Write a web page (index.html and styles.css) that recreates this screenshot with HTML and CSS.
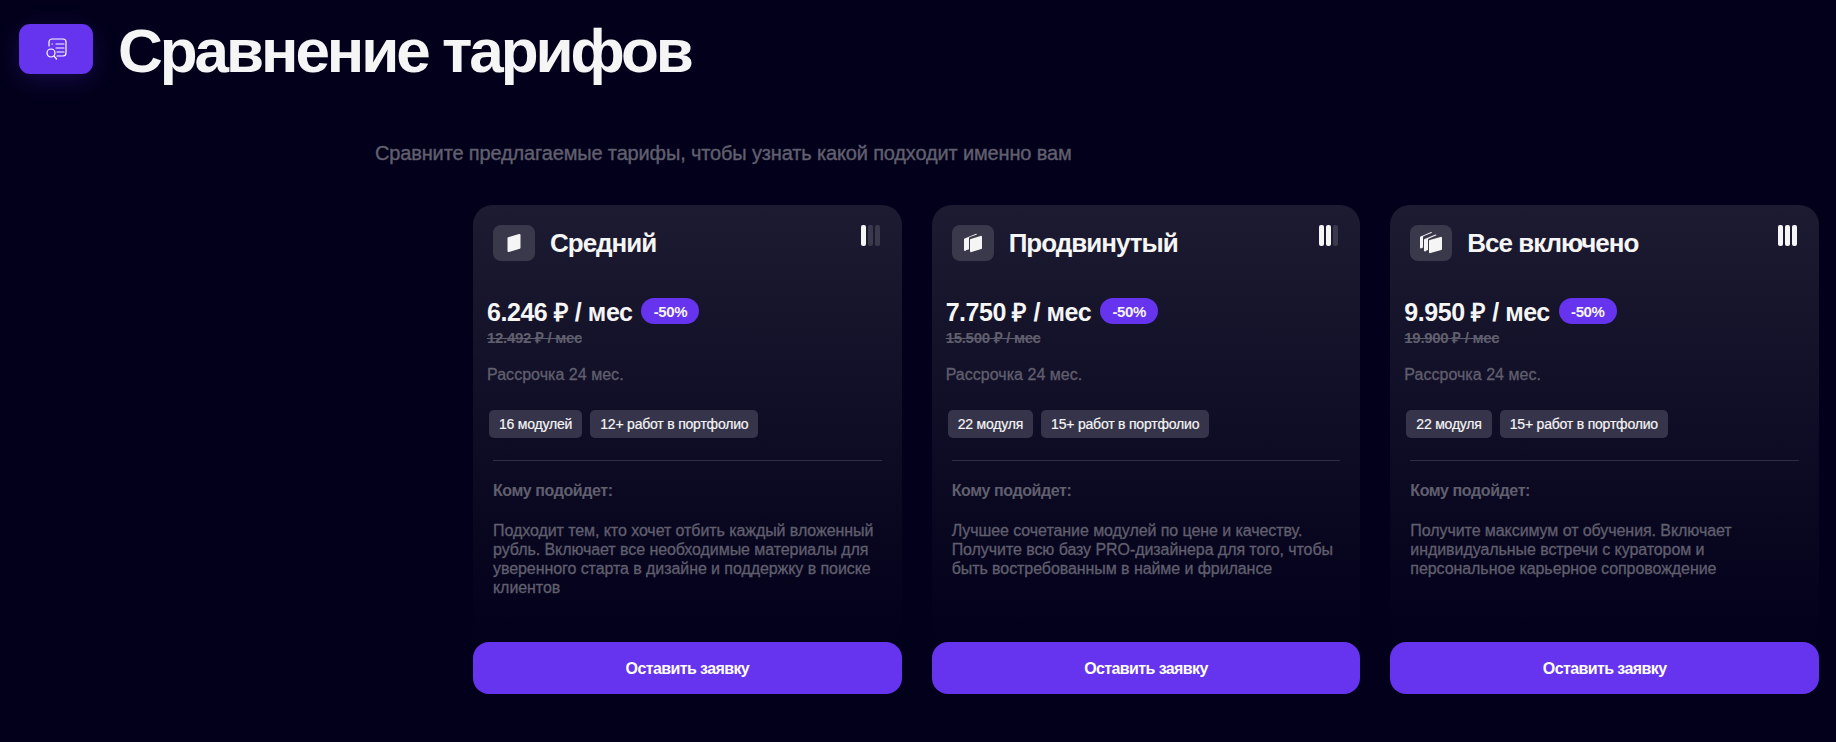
FILE: index.html
```html
<!DOCTYPE html>
<html lang="ru">
<head>
<meta charset="utf-8">
<title>Сравнение тарифов</title>
<link rel="stylesheet" href="styles.css">
</head>
<body>
<header class="page-head">
  <div class="head-icon">
    <svg width="24" height="24" viewBox="0 0 24 24" fill="none" stroke="#fff" stroke-width="1.2" stroke-linecap="round" stroke-linejoin="round">
      <path d="M5 9V5a3 3 0 0 1 3-3h11a3 3 0 0 1 3 3v11a3 3 0 0 1-3 3h-6"/>
      <path d="M8 7h.5M12 7h8M12 11h8M13 15h7"/>
      <circle cx="7" cy="16" r="4"/>
      <path d="M10 19l2.500 3"/>
    </svg>
  </div>
  <h1 class="page-title">Сравнение тарифов</h1>
</header>
<p class="subtitle">Сравните предлагаемые тарифы, чтобы узнать какой подходит именно вам</p>
<main class="plans">
  <article class="plan">
    <div class="plan-body">
      <div class="plan-head">
        <div class="plan-icon">
          <svg width="22" height="22" viewBox="0 0 22 22"><path class="cube" d="M4.500 6.200a1 1 0 0 1 .7-1L16 2.100a1 1 0 0 1 1.500 1V15.800a1 1 0 0 1-.7 1L6 19.900a1 1 0 0 1-1.500-1z"/></svg>
        </div>
        <h2 class="plan-name">Средний</h2>
        <div class="level"><i class="bar on"></i><i class="bar"></i><i class="bar"></i></div>
      </div>
      <div class="price-row"><span class="price">6.246 ₽ / мес</span><span class="badge">-50%</span></div>
      <div class="old-price">12.492 ₽ / мес</div>
      <div class="terms">Рассрочка 24 мес.</div>
      <div class="chips"><span class="chip">16 модулей</span><span class="chip">12+ работ в портфолио</span></div>
      <div class="about">
        <h3 class="about-title">Кому подойдет:</h3>
        <p class="about-text">Подходит тем, кто хочет отбить каждый вложенный рубль. Включает все необходимые материалы для уверенного старта в дизайне и поддержку в поиске клиентов</p>
      </div>
    </div>
    <button class="cta">Оставить заявку</button>
  </article>
  <article class="plan">
    <div class="plan-body">
      <div class="plan-head">
        <div class="plan-icon">
          <svg width="24" height="22" viewBox="0 0 24 22"><path class="cube" d="M3 7.500a1 1 0 0 1 .7-1L14.500 2a1 1 0 0 1 1.500.6L9 5a1.500 1.500 0 0 0-1 1.500V17.300L5 18.300a1 1 0 0 1-2-1z"/><path class="cube" d="M9 8a1 1 0 0 1 .7-1L19.500 4a1 1 0 0 1 1.500 1V16a1 1 0 0 1-.7 1L10.500 20a1 1 0 0 1-1.500-1z"/></svg>
        </div>
        <h2 class="plan-name">Продвинутый</h2>
        <div class="level"><i class="bar on"></i><i class="bar on"></i><i class="bar"></i></div>
      </div>
      <div class="price-row"><span class="price">7.750 ₽ / мес</span><span class="badge">-50%</span></div>
      <div class="old-price">15.500 ₽ / мес</div>
      <div class="terms">Рассрочка 24 мес.</div>
      <div class="chips"><span class="chip">22 модуля</span><span class="chip">15+ работ в портфолио</span></div>
      <div class="about">
        <h3 class="about-title">Кому подойдет:</h3>
        <p class="about-text">Лучшее сочетание модулей по цене и качеству. Получите всю базу PRO-дизайнера для того, чтобы быть востребованным в найме и фрилансе</p>
      </div>
    </div>
    <button class="cta">Оставить заявку</button>
  </article>
  <article class="plan">
    <div class="plan-body">
      <div class="plan-head">
        <div class="plan-icon">
          <svg width="26" height="24" viewBox="0 0 26 24"><path class="cube" d="M2 6.500a1 1 0 0 1 .7-1L12.500 1.200a1 1 0 0 1 1.500.6L6 5a1.500 1.500 0 0 0-1 1.500V16.500l-1.500.8a1 1 0 0 1-1.500-1z"/><path class="cube" d="M6 9a1 1 0 0 1 .7-1L17 3.700a1 1 0 0 1 1.500.6L11 7.500a1.500 1.500 0 0 0-1 1.500V19l-2 .8a1 1 0 0 1-2-1z"/><path class="cube" d="M11 10a1 1 0 0 1 .7-1L22.500 6a1 1 0 0 1 1.500 1V18a1 1 0 0 1-.7 1L12.500 22a1 1 0 0 1-1.500-1z"/></svg>
        </div>
        <h2 class="plan-name">Все включено</h2>
        <div class="level"><i class="bar on"></i><i class="bar on"></i><i class="bar on"></i></div>
      </div>
      <div class="price-row"><span class="price">9.950 ₽ / мес</span><span class="badge">-50%</span></div>
      <div class="old-price">19.900 ₽ / мес</div>
      <div class="terms">Рассрочка 24 мес.</div>
      <div class="chips"><span class="chip">22 модуля</span><span class="chip">15+ работ в портфолио</span></div>
      <div class="about">
        <h3 class="about-title">Кому подойдет:</h3>
        <p class="about-text">Получите максимум от обучения. Включает индивидуальные встречи с куратором и персональное карьерное сопровождение</p>
      </div>
    </div>
    <button class="cta">Оставить заявку</button>
  </article>
</main>
</body>
</html>
```
FILE: styles.css
```css
* { box-sizing: border-box; }
html, body { margin: 0; height: 100%; }
body {
  background: #02001a;
  color: #f5f5f5;
  font-family: "Liberation Sans", Arial, sans-serif;
  overflow: hidden;
}
.page-head {
  display: flex;
  align-items: center;
  gap: 25px;
  padding: 11px 0 0 19px;
  height: 87px;
}
.head-icon {
  width: 74px;
  height: 50px;
  border-radius: 11px;
  background: #6633ee;
  box-shadow: 0 6px 24px rgba(102, 51, 238, .22);
  display: flex;
  align-items: center;
  justify-content: center;
}
.page-title {
  margin: 0;
  padding-top: 4px;
  font-size: 62px;
  line-height: 70px;
  font-weight: 700;
  letter-spacing: -3.05px;
  color: #f5f5f5;
}
.subtitle {
  margin: 55px 0 0 375px;
  font-size: 20px;
  line-height: 22px;
  letter-spacing: -.15px;
  -webkit-text-stroke: .4px #605f6e;
  color: #605f6e;
}
.plans {
  display: flex;
  gap: 30px;
  margin: 41px 0 0 473px;
}
.plan {
  width: 428.670px;
  height: 489px;
  display: flex;
  flex-direction: column;
}
.plan-body {
  flex: 1;
  border-radius: 20px 20px 0 0;
  background: linear-gradient(180deg, #1d1b31 0%, #02001a 100%);
  padding-top: 20px;
}
.plan-head {
  display: flex;
  align-items: center;
  padding: 0 22px 0 20px;
  height: 36px;
}
.plan-icon {
  width: 42px;
  height: 36px;
  border-radius: 8px;
  background: #3a384b;
  display: flex;
  align-items: center;
  justify-content: center;
  flex: none;
}
.cube { fill: #f5f5f5; }
.plan-name {
  margin: 0 0 0 15px;
  flex: 1;
  font-size: 26px;
  line-height: 34px;
  font-weight: 700;
  letter-spacing: -1px;
}
.level {
  display: flex;
  gap: 2px;
  align-self: flex-start;
}
.bar {
  display: block;
  width: 5px;
  height: 21px;
  border-radius: 2px;
  background: #3a384b;
}
.bar.on { background: #f5f5f5; }
.price-row {
  display: flex;
  align-items: center;
  gap: 9px;
  margin: 37px 0 0 14px;
  height: 26px;
}
.price {
  font-size: 25px;
  font-weight: 700;
  letter-spacing: -.45px;
}
.badge {
  width: 58px;
  height: 26px;
  border-radius: 13px;
  background: #6633ee;
  font-size: 15px;
  font-weight: 700;
  letter-spacing: -.4px;
  display: flex;
  align-items: center;
  justify-content: center;
}
.old-price {
  margin: 5px 0 0 14px;
  font-size: 15px;
  line-height: 18px;
  font-weight: 700;
  letter-spacing: -.3px;
  color: #605f6e;
  text-decoration: line-through;
}
.terms {
  margin: 18px 0 0 14px;
  font-size: 16px;
  line-height: 20px;
  letter-spacing: .03px;
  -webkit-text-stroke: .3px #605f6e;
  color: #605f6e;
}
.chips {
  display: flex;
  gap: 8px;
  margin: 25px 0 0 16px;
}
.chip {
  height: 28px;
  padding: 0 10px;
  border-radius: 5px;
  background: #35344a;
  font-size: 14px;
  line-height: 28px;
  letter-spacing: -.2px;
  -webkit-text-stroke: .2px #f5f5f5;
}
.about {
  margin: 22px 20px 0;
  border-top: 1px solid #2e2c42;
  padding-top: 20px;
  color: #605f6e;
}
.about-title {
  margin: 0;
  font-size: 16px;
  line-height: 20px;
  font-weight: 700;
  letter-spacing: -.4px;
}
.about-text {
  margin: 20px 0 0;
  font-size: 16px;
  line-height: 19px;
  letter-spacing: -.07px;
  -webkit-text-stroke: .3px #605f6e;
}
.cta {
  height: 52px;
  flex: none;
  border: 0;
  border-radius: 16px;
  padding-top: 3px;
  background: #6633ee;
  color: #fff;
  font-family: inherit;
  font-size: 16px;
  font-weight: 700;
  letter-spacing: -.6px;
}
```
